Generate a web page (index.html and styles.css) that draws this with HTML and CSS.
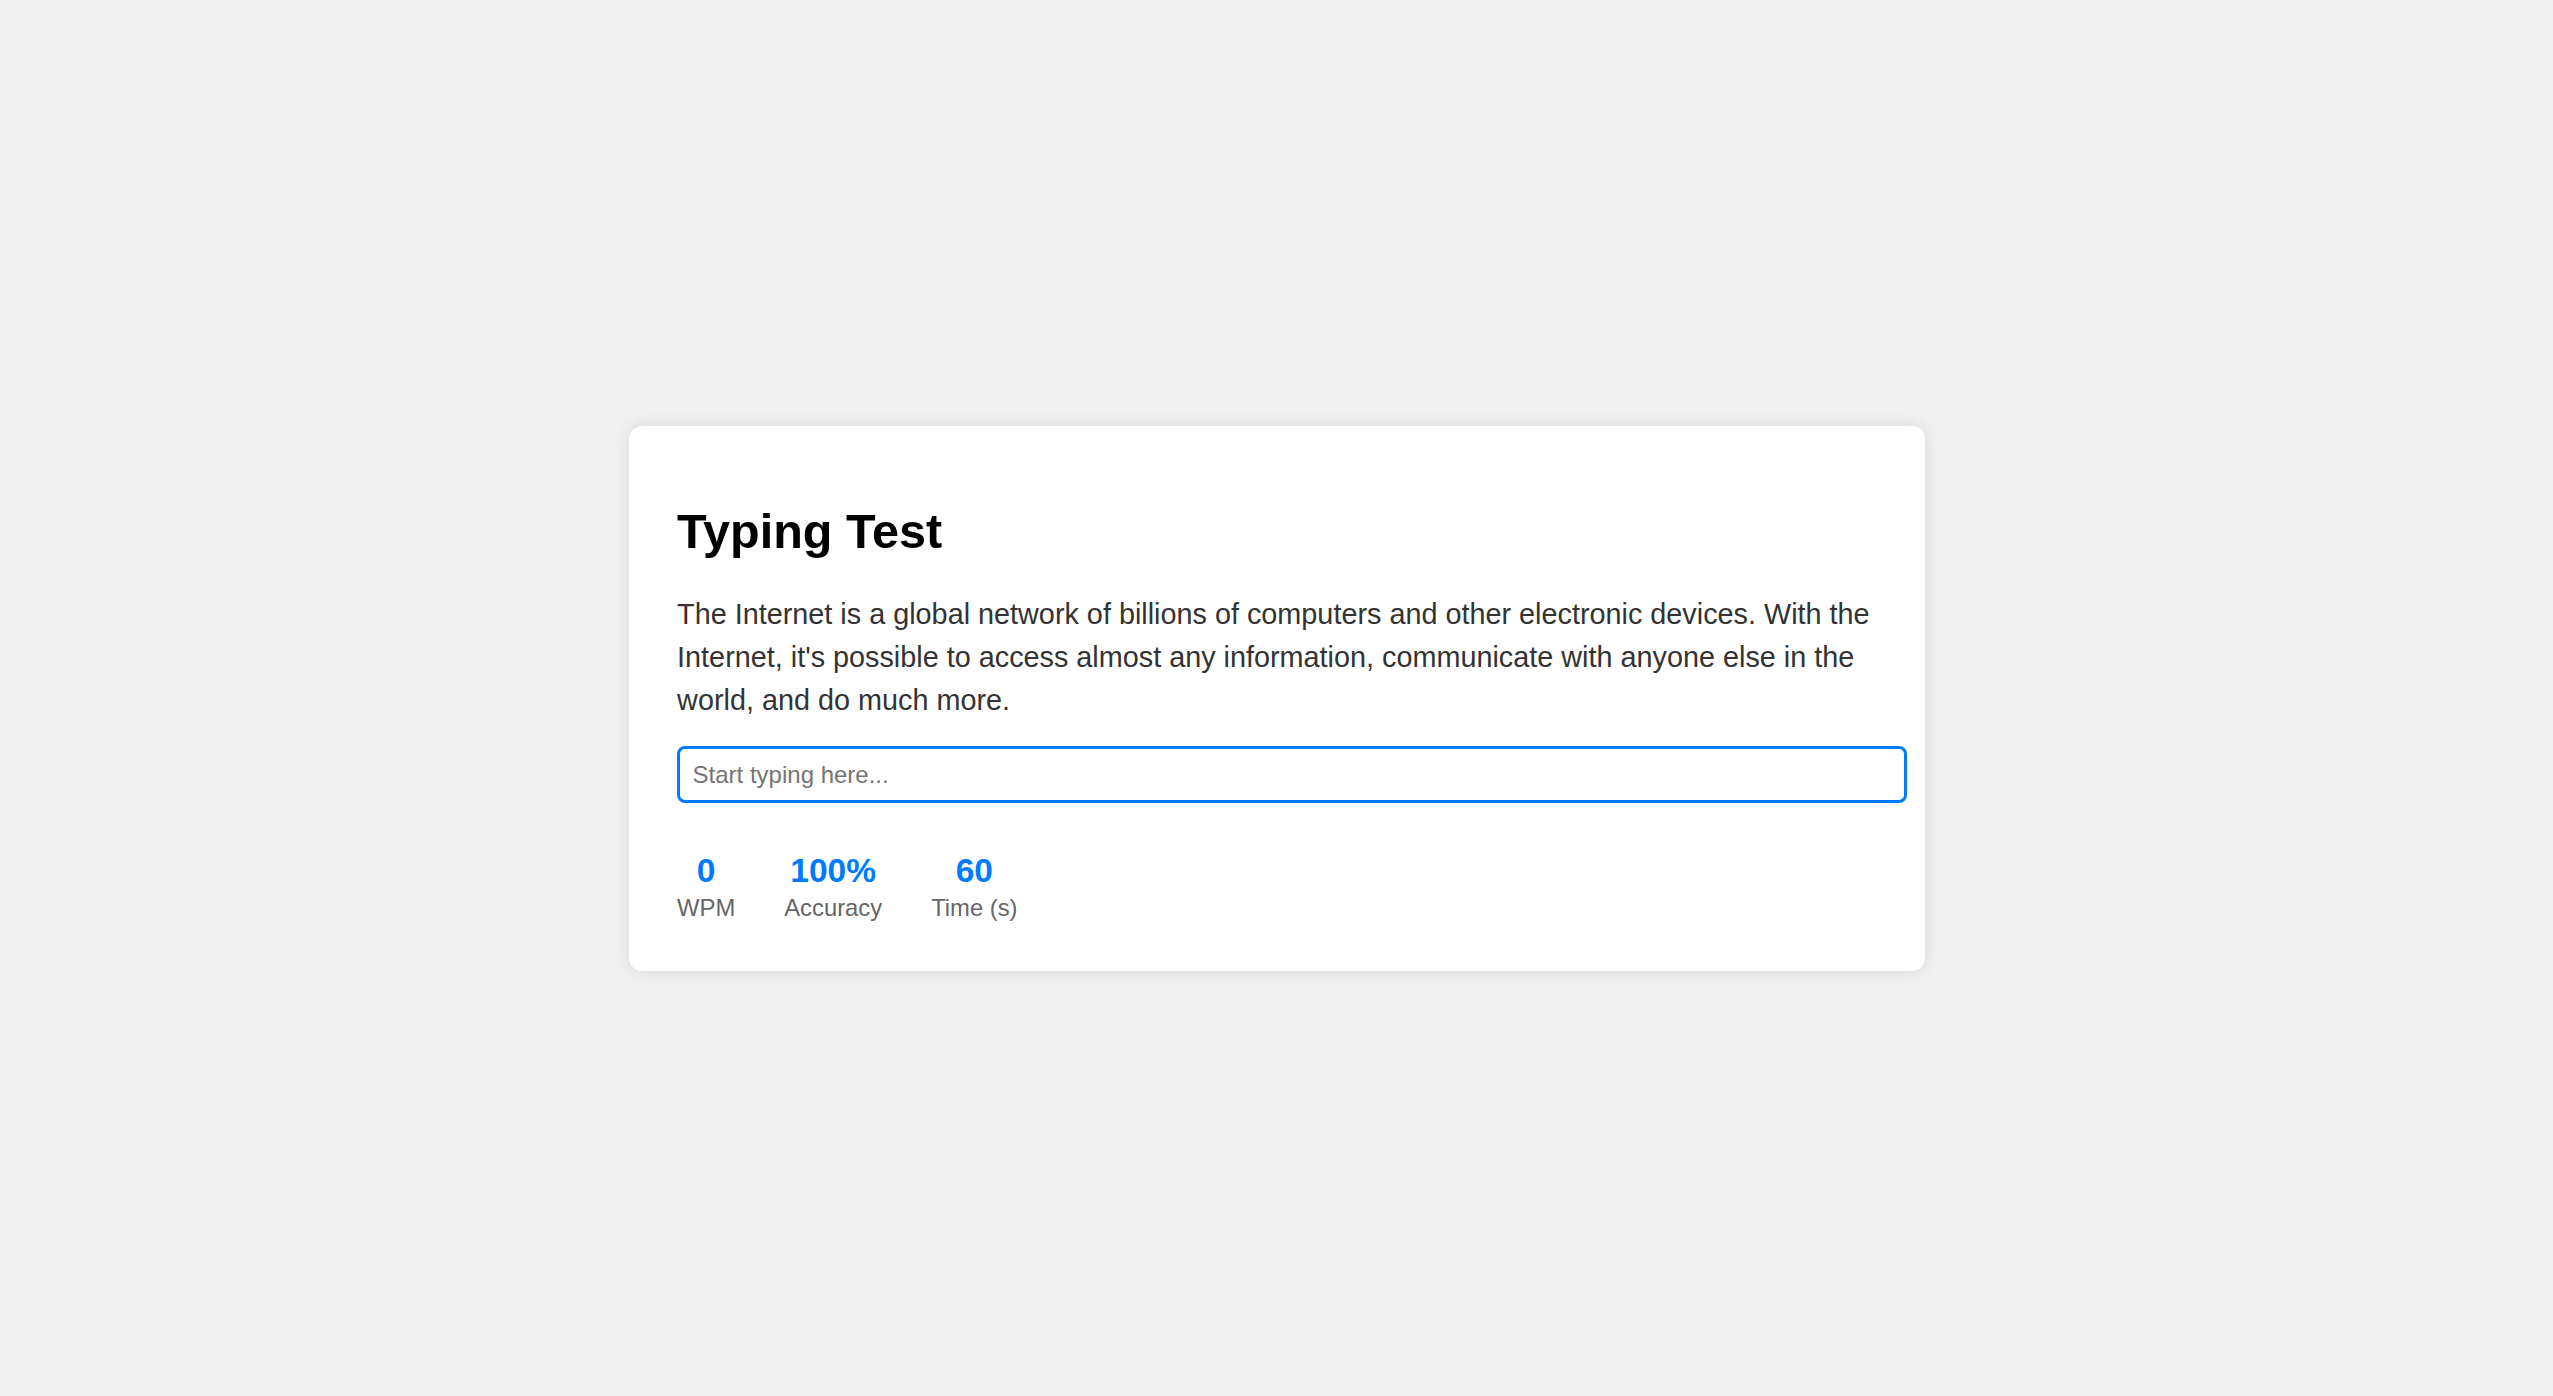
FILE: index.html
```html
<!DOCTYPE html>
<html lang="en">
<head>
<meta charset="utf-8">
<title>Typing Test</title>
<link rel="stylesheet" href="styles.css">
</head>
<body>
<main class="card">
  <h1 class="title">Typing Test</h1>
  <p class="passage">The Internet is a global network of billions of computers and other electronic devices. With the Internet, it's possible to access almost any information, communicate with anyone else in the world, and do much more.</p>
  <input class="typing-input" type="text" placeholder="Start typing here..." autofocus>
  <div class="stats">
    <div class="stat">
      <div class="stat-value">0</div>
      <div class="stat-label">WPM</div>
    </div>
    <div class="stat">
      <div class="stat-value">100%</div>
      <div class="stat-label">Accuracy</div>
    </div>
    <div class="stat">
      <div class="stat-value">60</div>
      <div class="stat-label">Time (s)</div>
    </div>
  </div>
</main>
</body>
</html>
```
FILE: styles.css
```css
html, body {
  margin: 0;
  padding: 0;
}
body {
  min-height: 100vh;
  display: flex;
  align-items: center;
  justify-content: center;
  background: #f0f0f0;
  font-family: "Liberation Sans", Arial, sans-serif;
}
.card {
  box-sizing: border-box;
  width: 1296px;
  padding: 48px 48.6px 49px;
  background: #ffffff;
  border-radius: 13px;
  box-shadow: 0 0 16px rgba(0, 0, 0, 0.1);
}
.title {
  font-size: 48.5px;
  font-weight: bold;
  color: #000;
  margin: 29.5px 0 34px;
  line-height: normal;
}
.passage {
  font-size: 28.8px;
  line-height: 43px;
  color: #333;
  margin: 0 0 24px;
}
.typing-input {
  display: block;
  width: 100%;
  box-sizing: content-box;
  padding: 11.5px 12.5px;
  border: 3px solid #007bff;
  border-radius: 8px;
  font-family: "Liberation Sans", Arial, sans-serif;
  font-size: 24px;
  outline: none;
  margin: 0;
}
.typing-input::placeholder {
  color: #757575;
}
.stats {
  display: flex;
  gap: 49px;
  margin-top: 49px;
}
.stat {
  text-align: center;
}
.stat-value {
  font-size: 33.5px;
  font-weight: bold;
  color: #007bff;
  line-height: normal;
}
.stat-label {
  font-size: 23.8px;
  color: #666;
  margin-top: 3.5px;
  line-height: normal;
}
```
